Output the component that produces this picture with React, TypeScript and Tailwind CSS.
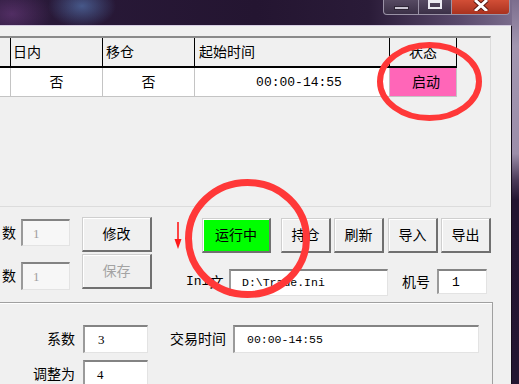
import React from "react";

const cjk = "font-['Liberation_Sans','Noto_Sans_CJK_SC',sans-serif]";
const mono = "font-['Liberation_Mono','Noto_Sans_CJK_SC',monospace]";

function Btn({
  label,
  className,
  green,
  disabled,
}: {
  label: string;
  className: string;
  green?: boolean;
  disabled?: boolean;
}) {
  return (
    <div
      className={`flex h-[35px] items-center justify-center border border-t-[#cfcfcf] border-l-[#cfcfcf] border-b-2 border-r-2 border-b-[#707070] border-r-[#707070] text-[14px] leading-none shadow-[inset_1px_1px_0_#ffffff] ${className} ${
        green ? "bg-[#00ff00]" : "bg-[#f0f0f0]"
      } ${disabled ? "text-[#a3a3a3]" : "text-black"}`}
    >
      {label}
    </div>
  );
}

function Field({
  value,
  className,
  gray,
  font,
}: {
  value: string;
  className: string;
  gray?: boolean;
  font?: string;
}) {
  return (
    <div
      className={`flex shrink-0 items-center border-t-2 border-l-2 border-t-[#838383] border-l-[#9a9a9a] border-b border-r border-b-[#e3e3e3] border-r-[#e3e3e3] leading-none ${
        font ?? "font-['Liberation_Serif',serif] text-[13px]"
      } ${gray ? "bg-[#f7f7f7] text-[#a0a0a0]" : "bg-white text-black"} ${className}`}
    >
      {value}
    </div>
  );
}

function HeadCell({ label, className }: { label: string; className: string }) {
  return (
    <div
      className={`flex h-full items-center border-r border-b-2 border-black text-[14px] leading-none ${className}`}
    >
      {label}
    </div>
  );
}

function DataCell({
  children,
  className,
}: {
  children?: React.ReactNode;
  className: string;
}) {
  return (
    <div
      className={`flex h-full items-center justify-center border-r border-b border-[#c4c4c4] ${className}`}
    >
      {children}
    </div>
  );
}

function TitleButtons() {
  return (
    <div className="flex h-[15px]">
      <div className="flex w-[36px] items-center justify-center rounded-bl-[4px] border border-t-0 border-[#9a92a6] bg-[linear-gradient(to_bottom,#564a62,#3b3047)]">
        <div className="mt-[1px] h-[4px] w-[15px] border border-[#2e2636] bg-[#c9c5d2]" />
      </div>
      <div className="flex w-[33px] items-start justify-center border-b border-r border-[#9a92a6] bg-[linear-gradient(to_bottom,#564a62,#3b3047)]">
        <div className="h-[9px] w-[14px] border-2 border-t-[3px] border-[#ecebf2]" />
      </div>
      <div className="flex w-[58px] items-start justify-center rounded-br-[4px] border-b border-r border-[#9a92a6] bg-[linear-gradient(to_bottom,#d24e36,#a9321f)]">
        <svg width="18" height="11" viewBox="0 0 18 11">
          <path d="M3 0 L15 11 M15 0 L3 11" stroke="#5a1810" strokeWidth="5" />
          <path d="M3 0 L15 11 M15 0 L3 11" stroke="#ffffff" strokeWidth="3" />
        </svg>
      </div>
    </div>
  );
}

export default function App() {
  return (
    <div className={`relative flex h-[384px] w-[519px] overflow-hidden bg-[#231430] ${cjk}`}>
      <div className="flex h-[384px] w-[512px] flex-col">
        <div className="flex h-[25px] shrink-0 justify-end pr-[2px] bg-[radial-gradient(34px_22px_at_82px_6px,rgba(95,140,205,0.55),transparent),radial-gradient(40px_26px_at_12px_14px,rgba(130,70,150,0.45),transparent),linear-gradient(to_right,#2a1a3a,#241531_50%,#2a1b38_72%,#5a4a6c_90%,#7a6c8c)]">
          <TitleButtons />
        </div>

        <div className="flex min-h-0 flex-1 flex-col overflow-hidden border-t border-r border-t-[#d6cde2] border-r-[#140c1a] bg-[#f0f0f0]">
          {/* grid */}
          <div className="mt-[10px] flex h-[171px] w-[491px] shrink-0 flex-col border-t-2 border-r border-b border-t-[#8a8a8a] border-r-[#dcdcdc] border-b-[#dcdcdc]">
            <div className="flex h-[30px] shrink-0">
              <HeadCell label="" className="w-[11px]" />
              <HeadCell label="日内" className="w-[92px] pl-[2px]" />
              <HeadCell label="移仓" className="w-[92px] pl-[3px]" />
              <HeadCell label="起始时间" className="w-[195px] pl-[4px]" />
              <HeadCell label="状态" className="w-[67px] justify-center" />
            </div>
            <div className="flex h-[29px] shrink-0 text-[14px] leading-none">
              <DataCell className="w-[11px] bg-white" />
              <DataCell className="w-[92px] bg-white">否</DataCell>
              <DataCell className="w-[92px] bg-white">否</DataCell>
              <DataCell className={`w-[195px] bg-white pl-[14px] text-[13px] ${mono}`}>
                00:00-14:55
              </DataCell>
              <DataCell className="w-[67px] bg-[#ff66b8] pl-[6px]">启动</DataCell>
            </div>
          </div>

          {/* controls */}
          <div className="flex h-[95px] shrink-0 items-start">
            <div className="flex flex-col pt-[12px]">
              <div className="flex items-center">
                <span className="w-[16px] pl-[2px] text-[14px] leading-none">数</span>
                <Field value="1" gray className="ml-[5px] h-[27px] w-[49px] pl-[10px]" />
              </div>
              <div className="mt-[16px] flex items-center">
                <span className="w-[16px] pl-[2px] text-[14px] leading-none">数</span>
                <Field value="1" gray className="ml-[5px] h-[28px] w-[49px] pl-[10px]" />
              </div>
            </div>

            <div className="ml-[12px] flex flex-col gap-[2px] pt-[10px]">
              <Btn label="修改" className="w-[70px]" />
              <Btn label="保存" className="w-[70px]" disabled />
            </div>

            <div className="ml-[34px] flex flex-col pt-[11px]">
              <div className="flex pl-[16px]">
                <Btn label="运行中" className="w-[69px]" green />
                <Btn label="持仓" className="ml-[10px] w-[50px]" />
                <Btn label="刷新" className="ml-[3px] w-[50px]" />
                <Btn label="导入" className="ml-[4px] w-[50px]" />
                <Btn label="导出" className="ml-[3px] w-[50px]" />
              </div>
              <div className="mt-[14px] flex items-center">
                <span className="flex w-[43px] items-center text-[14px] leading-none">
                  <span className={`text-[13px] ${mono}`}>Ini</span>文
                </span>
                <Field
                  value="D:\Trade.Ini"
                  font={`${mono} text-[11.5px]`}
                  className="mt-[2px] h-[27px] w-[159px] pl-[11px]"
                />
                <span className="ml-[14px] text-[14px] leading-none">机号</span>
                <Field
                  value="1"
                  font={`${mono} text-[13px]`}
                  className="ml-[7px] h-[25px] w-[50px] pl-[13px]"
                />
              </div>
            </div>
          </div>

          {/* settings group */}
          <div className="flex w-[493px] flex-1 flex-col border-t border-r border-[#a0a0a0] shadow-[inset_0_1px_0_#ffffff]">
            <div className="mt-[22px] flex items-center text-[14px] leading-none">
              <span className="w-[75px] text-right">系数</span>
              <Field value="3" className="ml-[8px] h-[28px] w-[65px] pl-[13px]" />
              <span className="ml-[22px]">交易时间</span>
              <Field
                value="00:00-14:55"
                font={`${mono} text-[11.5px]`}
                className="ml-[7px] h-[28px] w-[246px] pl-[12px]"
              />
            </div>
            <div className="mt-[7px] flex items-center text-[14px] leading-none">
              <span className="w-[75px] text-right">调整为</span>
              <Field value="4" className="ml-[8px] h-[28px] w-[65px] pl-[12px]" />
            </div>
          </div>
        </div>
      </div>

      <div className="flex-1 bg-[linear-gradient(to_bottom,#7c6e8e,#a296b0_12%,#9c8eaa_40%,#4a3a58_47%,#231531_52%,#241632)]" />

      {/* annotations */}
      <svg
        className="pointer-events-none absolute left-0 top-0"
        width="519"
        height="384"
        viewBox="0 0 519 384"
      >
        <ellipse cx="429.5" cy="81.5" rx="49.5" ry="36.5" fill="none" stroke="#ff3838" strokeWidth="6" />
        <ellipse cx="247.5" cy="238.5" rx="59" ry="56" fill="none" stroke="#ff3838" strokeWidth="7" />
        <path d="M178 222 L178 243" stroke="#ff1a1a" strokeWidth="1.6" />
        <path d="M174.5 239 L181.5 239 L178 249 Z" fill="#ff1a1a" />
      </svg>
    </div>
  );
}
